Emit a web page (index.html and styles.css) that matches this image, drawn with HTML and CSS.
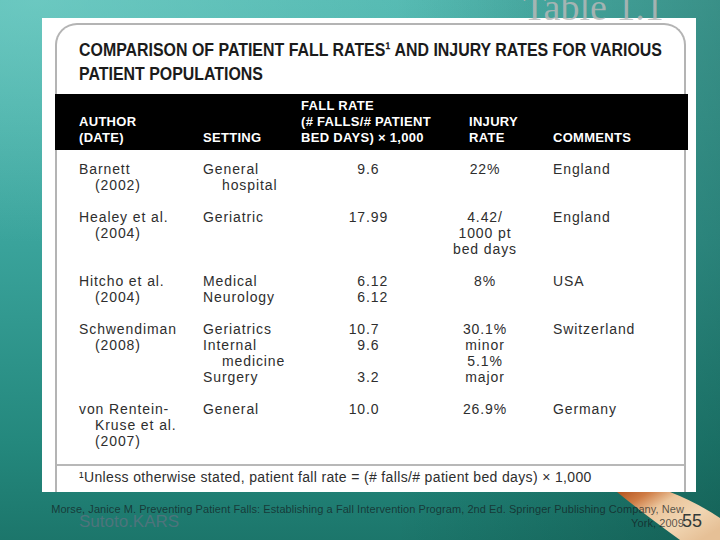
FILE: index.html
```html
<!DOCTYPE html>
<html lang="en">
<head>
<meta charset="utf-8">
<title>Table 1.1</title>
<link rel="stylesheet" href="styles.css">
</head>
<body>
<div class="slide">
  <div class="slide-title">Table 1.1</div>

  <svg class="finger" width="120" height="60" viewBox="0 0 120 60" aria-hidden="true">
    <defs>
      <linearGradient id="skin" x1="0" y1="0" x2="1" y2="0.75">
        <stop offset="0" stop-color="#b4531f"/>
        <stop offset="0.2" stop-color="#cf7c45"/>
        <stop offset="0.4" stop-color="#ebc59c"/>
        <stop offset="0.7" stop-color="#f1d6b3"/>
        <stop offset="1" stop-color="#e6c096"/>
      </linearGradient>
    </defs>
    <path d="M17 12 L70 12 Q96 22 120 38 L120 60 L80 60 Q44 34 17 12 Z" fill="url(#skin)"/>
  </svg>

  <div class="figure">
    <div class="frame">
      <h1 class="title">
        <span class="title-line">COMPARISON OF PATIENT FALL RATES¹ AND INJURY RATES FOR VARIOUS</span>
        <span class="title-line">PATIENT POPULATIONS</span>
      </h1>

      <div class="thead">
        <div class="th"><span>AUTHOR</span><span>(DATE)</span></div>
        <div class="th"><span>SETTING</span></div>
        <div class="th"><span>FALL RATE</span><span>(# FALLS/# PATIENT</span><span>BED DAYS) × 1,000</span></div>
        <div class="th"><span>INJURY</span><span>RATE</span></div>
        <div class="th"><span>COMMENTS</span></div>
      </div>

      <div class="tbody">
        <div class="row">
          <div class="cell"><span class="ln">Barnett</span><span class="ln in">(2002)</span></div>
          <div class="cell"><span class="ln">General</span><span class="ln in2">hospital</span></div>
          <div class="cell"><span class="ln"><span class="int">9</span>.6</span></div>
          <div class="cell inj"><span class="ln">22%</span></div>
          <div class="cell com"><span class="ln">England</span></div>
        </div>
        <div class="row">
          <div class="cell"><span class="ln">Healey et al.</span><span class="ln in">(2004)</span></div>
          <div class="cell"><span class="ln">Geriatric</span></div>
          <div class="cell"><span class="ln"><span class="int">17</span>.99</span></div>
          <div class="cell inj"><span class="ln">4.42/</span><span class="ln">1000 pt</span><span class="ln">bed days</span></div>
          <div class="cell com"><span class="ln">England</span></div>
        </div>
        <div class="row">
          <div class="cell"><span class="ln">Hitcho et al.</span><span class="ln in">(2004)</span></div>
          <div class="cell"><span class="ln">Medical</span><span class="ln">Neurology</span></div>
          <div class="cell"><span class="ln"><span class="int">6</span>.12</span><span class="ln"><span class="int">6</span>.12</span></div>
          <div class="cell inj"><span class="ln">8%</span></div>
          <div class="cell com"><span class="ln">USA</span></div>
        </div>
        <div class="row">
          <div class="cell"><span class="ln">Schwendiman</span><span class="ln in">(2008)</span></div>
          <div class="cell"><span class="ln">Geriatrics</span><span class="ln">Internal</span><span class="ln in2">medicine</span><span class="ln">Surgery</span></div>
          <div class="cell"><span class="ln"><span class="int">10</span>.7</span><span class="ln"><span class="int">9</span>.6</span><span class="ln">&nbsp;</span><span class="ln"><span class="int">3</span>.2</span></div>
          <div class="cell inj"><span class="ln">30.1%</span><span class="ln">minor</span><span class="ln">5.1%</span><span class="ln">major</span></div>
          <div class="cell com"><span class="ln">Switzerland</span></div>
        </div>
        <div class="row">
          <div class="cell"><span class="ln">von Rentein-</span><span class="ln in">Kruse et al.</span><span class="ln in">(2007)</span></div>
          <div class="cell"><span class="ln">General</span></div>
          <div class="cell"><span class="ln"><span class="int">10</span>.0</span></div>
          <div class="cell inj"><span class="ln">26.9%</span></div>
          <div class="cell com"><span class="ln">Germany</span></div>
        </div>
      </div>

      <div class="foot">¹Unless otherwise stated, patient fall rate = (# falls/# patient bed days) × 1,000</div>
    </div>
  </div>

  <div class="footer">
    <span class="brand">Sutoto.KARS</span>
    <span class="page">55</span>
  </div>
  <p class="citation">Morse, Janice M. Preventing Patient Falls: Establishing a Fall Intervention Program, 2nd Ed. Springer Publishing Company, New<br>York, 2009</p>
</div>
</body>
</html>
```

FILE: styles.css
```css
* {
  box-sizing: border-box;
  margin: 0;
  padding: 0;
}

body {
  margin: 0;
  width: 720px;
  height: 540px;
  overflow: hidden;
  font-family: "Liberation Sans", Arial, sans-serif;
}

.slide {
  position: relative;
  width: 720px;
  height: 540px;
  overflow: hidden;
  background:
    radial-gradient(ellipse 70% 45% at 5% 0%, rgba(130, 215, 208, 0.55), rgba(130, 215, 208, 0) 100%),
    linear-gradient(to right, rgba(0, 40, 30, 0) 55%, rgba(0, 45, 35, 0.28) 100%),
    linear-gradient(to bottom, #4fb6ae 0%, #3aa39b 45%, #24887d 82%, #1c766b 100%);
}

.slide-title {
  position: absolute;
  z-index: 3;
  left: 523px;
  top: -12px;
  font-family: "Liberation Serif", "Times New Roman", serif;
  font-size: 38px;
  line-height: 38px;
  color: rgba(182, 184, 184, 0.85);
  white-space: nowrap;
}

.finger {
  position: absolute;
  z-index: 0;
  right: 0;
  bottom: 0;
}

.figure {
  position: relative;
  z-index: 1;
  margin: 18px 24px 0 42px;
  height: 474px;
  background: #fff;
  padding: 5px 10px 0 13px;
  overflow: hidden;
}

.frame {
  height: 100%;
  border: 2px solid #b4b4b4;
  border-bottom: 0;
  border-radius: 22px 22px 0 0;
  display: flex;
  flex-direction: column;
}

.title {
  padding: 13px 0 0 22px;
  margin-bottom: 8px;
  font-weight: bold;
  font-size: 19px;
  line-height: 24px;
  color: #1b1b1b;
}

.title-line {
  display: block;
  white-space: nowrap;
  transform: scaleX(0.838);
  transform-origin: 0 0;
}

.thead {
  margin: 0 -4px 0 -2px;
  height: 56px;
  padding: 4px 0 4px 24px;
  background: #000;
  color: #fff;
  display: grid;
  grid-template-columns: 124px 98px 168px 84px 1fr;
  align-items: end;
  font-weight: bold;
  font-size: 13px;
  line-height: 16px;
  letter-spacing: 0.3px;
}

.th span {
  display: block;
  white-space: nowrap;
}

.tbody {
  padding: 11px 0 15px 22px;
  display: flex;
  flex-direction: column;
  gap: 16px;
  font-size: 14px;
  line-height: 16px;
  letter-spacing: 0.9px;
  color: #2e2e2e;
}

.row {
  display: grid;
  grid-template-columns: 124px 98px 144px 80px 1fr;
}

.ln {
  display: block;
  white-space: nowrap;
}

.in {
  padding-left: 16px;
}

.in2 {
  padding-left: 19px;
}

.int {
  display: inline-block;
  width: 65px;
  text-align: right;
}

.inj {
  text-align: center;
}

.com {
  padding-left: 28px;
}

.foot {
  border-top: 2px solid #b8b8b8;
  padding: 3px 0 0 22px;
  font-size: 14px;
  line-height: 16px;
  letter-spacing: 0.35px;
  color: #2e2e2e;
  white-space: nowrap;
}

.footer {
  position: relative;
  z-index: 2;
  height: 48px;
  padding: 19px 18px 0 79px;
  display: flex;
  justify-content: space-between;
  align-items: baseline;
}

.brand {
  font-size: 17px;
  line-height: 20px;
  color: #4d747c;
}

.page {
  font-size: 18px;
  line-height: 20px;
  color: #343a38;
}

.citation {
  position: absolute;
  z-index: 3;
  left: 40px;
  right: 36px;
  top: 502px;
  text-align: right;
  font-size: 11px;
  line-height: 14px;
  letter-spacing: 0.07px;
  color: rgba(20, 32, 34, 0.72);
  white-space: nowrap;
}
```
